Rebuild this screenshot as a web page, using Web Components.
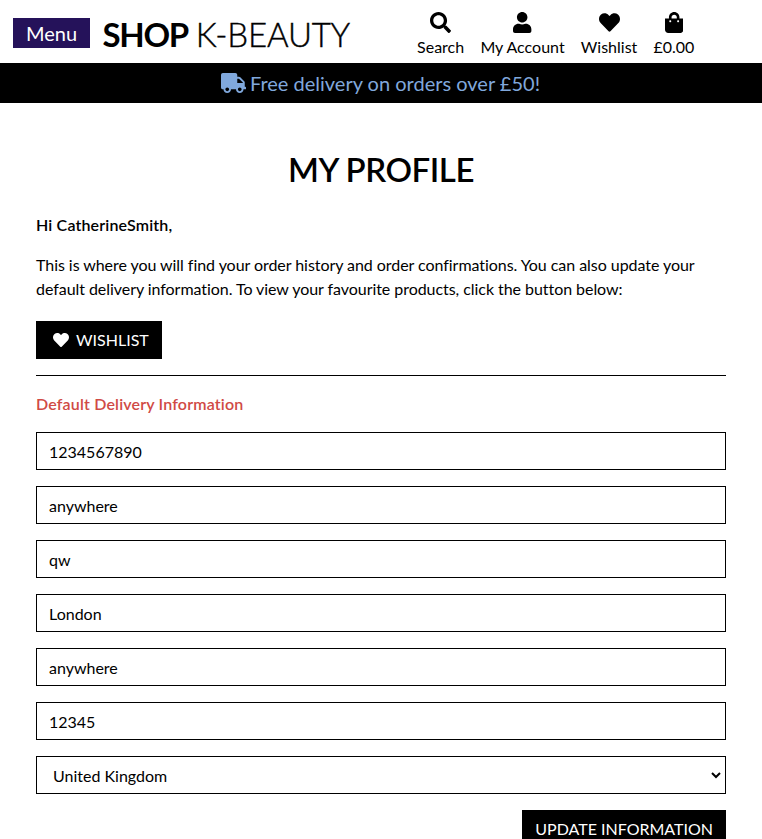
<!DOCTYPE html>
<html lang="en">
<head>
<meta charset="utf-8">
<title>My Profile</title>
<style>
body { margin: 0; background: #fff; color: #000; font: 16px/24px Lato, sans-serif; height: 839px; overflow: hidden; }
</style>
</head>
<body>
<kb-page></kb-page>
<script>
const ICONS = {
  search: ['0 0 512 512', 'M505 442.7L405.3 343c-4.5-4.5-10.6-7-17-7H372c27.6-35.3 44-79.7 44-128C416 93.1 322.9 0 208 0S0 93.1 0 208s93.1 208 208 208c48.3 0 92.7-16.4 128-44v16.3c0 6.4 2.5 12.5 7 17l99.7 99.7c9.4 9.4 24.6 9.4 33.9 0l28.3-28.3c9.4-9.4 9.4-24.6.1-34zM208 336c-70.7 0-128-57.2-128-128 0-70.7 57.2-128 128-128 70.7 0 128 57.2 128 128 0 70.7-57.2 128-128 128z'],
  user: ['0 0 448 512', 'M224 256c70.7 0 128-57.3 128-128S294.7 0 224 0 96 57.3 96 128s57.3 128 128 128zm89.6 32h-16.7c-22.2 10.2-46.9 16-72.9 16s-50.6-5.8-72.9-16h-16.7C60.2 288 0 348.2 0 422.4V464c0 26.5 21.5 48 48 48h352c26.5 0 48-21.5 48-48v-41.6c0-74.2-60.2-134.4-134.4-134.4z'],
  heart: ['0 0 512 512', 'M462.3 62.6C407.5 15.9 326 24.3 275.7 76.2L256 96.500l-19.700-20.300C186.100 24.300 104.500 15.900 49.700 62.600c-62.800 53.600-66.100 149.800-9.900 207.900l193.500 199.800c12.500 12.900 32.800 12.900 45.300 0l193.500-199.800c56.300-58.100 53-154.300-9.800-207.900z'],
  bag: ['0 0 448 512', 'M352 160v-32C352 57.420 294.579 0 224 0 153.420 0 96 57.420 96 128v32H0v272c0 44.183 35.817 80 80 80h288c44.183 0 80-35.817 80-80V160h-96zm-192-32c0-35.290 28.710-64 64-64s64 28.710 64 64v32H160v-32zm160 120c-13.255 0-24-10.745-24-24s10.745-24 24-24 24 10.745 24 24-10.745 24-24 24zm-192 0c-13.255 0-24-10.745-24-24s10.745-24 24-24 24 10.745 24 24-10.745 24-24 24z'],
  truck: ['0 0 640 512', 'M624 352h-16V243.900c0-12.700-5.100-24.900-14.100-33.900L494 110.100c-9-9-21.200-14.100-33.900-14.100H416V48c0-26.500-21.500-48-48-48H48C21.500 0 0 21.500 0 48v320c0 26.500 21.500 48 48 48h16c0 53 43 96 96 96s96-43 96-96h128c0 53 43 96 96 96s96-43 96-96h48c8.800 0 16-7.200 16-16v-32c0-8.800-7.200-16-16-16zM160 464c-26.500 0-48-21.500-48-48s21.500-48 48-48 48 21.500 48 48-21.500 48-48 48zm320 0c-26.500 0-48-21.500-48-48s21.500-48 48-48 48 21.500 48 48-21.500 48-48 48zm80-208H416V144h44.100l99.900 99.900V256z']
};
function define(name, render) {
  customElements.define(name, class extends HTMLElement {
    connectedCallback() {
      if (!this.shadowRoot) this.attachShadow({ mode: 'open' }).innerHTML = render(this);
    }
  });
}
define('kb-icon', el => {
  const [box, d] = ICONS[el.getAttribute('name')];
  return `<style>:host{display:inline-block;height:var(--icon-size,20px)}svg{display:block;height:100%;fill:currentColor}</style>
  <svg viewBox="${box}" aria-hidden="true"><path d="${d}"/></svg>`;
});
define('kb-nav-item', el => `<style>
  :host{display:flex;flex-direction:column;align-items:center;gap:3px;line-height:24px;white-space:nowrap}
  kb-icon{--icon-size:21px;margin-bottom:-1px}
  </style><kb-icon name="${el.getAttribute('icon')}"></kb-icon><span><slot></slot></span>`);
define('kb-header', () => `<style>
  :host{display:flex;height:63px;align-items:flex-start;box-sizing:border-box;padding:0 67.6px 0 13px}
  button{margin:18px 0 0;width:77px;height:30px;padding:0;border:0;background:#25125a;color:#fff;font:20px/30px Lato,sans-serif}
  .logo{margin:13px 0 0 12.500px;font-size:33px;line-height:42px;font-weight:300;letter-spacing:-.2px;white-space:nowrap;-webkit-text-stroke:.4px #000}
  b{font-weight:700;letter-spacing:-1.300px;margin-right:-1px;-webkit-text-stroke:0}
  nav{display:flex;gap:16.2px;margin:12px 0 0 auto}
  </style><button>Menu</button><div class="logo"><b>SHOP</b> K-BEAUTY</div>
  <nav><kb-nav-item icon="search">Search</kb-nav-item><kb-nav-item icon="user">My Account</kb-nav-item>
  <kb-nav-item icon="heart">Wishlist</kb-nav-item><kb-nav-item icon="bag">£0.00</kb-nav-item></nav>`);
define('kb-banner', () => `<style>
  :host{display:flex;height:40px;box-sizing:border-box;padding-right:1px;justify-content:center;align-items:center;gap:4px;background:#000;color:#80a8dc;font-size:20px;line-height:24px}
  </style><kb-icon name="truck"></kb-icon><span><slot></slot></span>`);
define('kb-button', () => `<style>
  :host{display:flex;width:max-content;height:38px;box-sizing:border-box;padding:0 13px;align-items:center;background:#000;color:#fff;--icon-size:16px}
  </style><slot></slot>`);
define('kb-field', () => `<style>
  :host{display:flex;height:38px;box-sizing:border-box;border:1px solid #000;padding:1px 12px 0;align-items:center}
  </style><slot></slot>`);
define('kb-select', () => `<style>
  :host{display:flex;height:38px;box-sizing:border-box;border:1px solid #000;padding:1px 4px 0 16px;align-items:center;justify-content:space-between}
  svg{width:10px;height:7px;fill:none;stroke:#000;stroke-width:2}
  </style><span><slot></slot></span><svg viewBox="0 0 10 7"><path d="M1 1l4 4 4-4"/></svg>`);
define('kb-page', () => `<style>
  :host{display:block}
  main{padding:45px 36px 0}
  h1{margin:0;font-size:33px;line-height:42px;font-weight:600;letter-spacing:-.45px;text-align:center}
  p{margin:0}
  .hi{margin-top:23px;font-weight:600;letter-spacing:.16px}
  .intro{margin:16px 0 20px;letter-spacing:-.052px}
  .wish{padding-left:17px}
  .wish kb-icon{margin-right:7px}
  hr{border:0;border-top:1px solid #000;margin:16px 0}
  h2{margin:0 0 16px;font-size:16px;line-height:24px;font-weight:600;letter-spacing:.17px;color:#d04a45}
  form{display:flex;flex-direction:column;gap:16px}
  .update{align-self:flex-end}
  </style>
  <kb-header></kb-header>
  <kb-banner>Free delivery on orders over £50!</kb-banner>
  <main><h1>MY PROFILE</h1>
  <p class="hi">Hi CatherineSmith,</p>
  <p class="intro">This is where you will find your order history and order confirmations. You can also update your default delivery information. To view your favourite products, click the button below:</p>
  <kb-button class="wish"><kb-icon name="heart"></kb-icon>WISHLIST</kb-button>
  <hr><h2>Default Delivery Information</h2>
  <form><kb-field>1234567890</kb-field><kb-field>anywhere</kb-field><kb-field>qw</kb-field><kb-field>London</kb-field>
  <kb-field>anywhere</kb-field><kb-field>12345</kb-field><kb-select>United Kingdom</kb-select>
  <kb-button class="update">UPDATE INFORMATION</kb-button></form></main>`);
</script>
</body>
</html>
